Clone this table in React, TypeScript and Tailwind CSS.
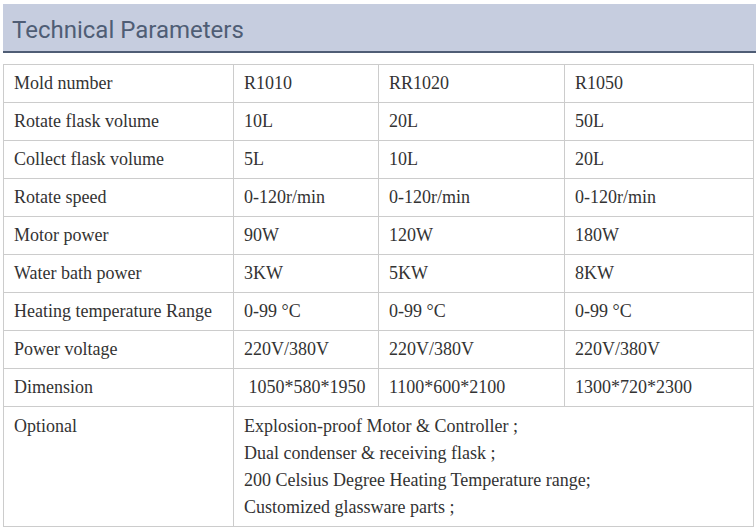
import React from "react";

const rows: string[][] = [
  ["Mold number", "R1010", "RR1020", "R1050"],
  ["Rotate flask volume", "10L", "20L", "50L"],
  ["Collect flask volume", "5L", "10L", "20L"],
  ["Rotate speed", "0-120r/min", "0-120r/min", "0-120r/min"],
  ["Motor power", "90W", "120W", "180W"],
  ["Water bath power", "3KW", "5KW", "8KW"],
  ["Heating temperature Range", "0-99 \u00b0C", "0-99 \u00b0C", "0-99 \u00b0C"],
  ["Power voltage", "220V/380V", "220V/380V", "220V/380V"],
  ["Dimension", "\u00a01050*580*1950", "1100*600*2100", "1300*720*2300"],
];

const optional = [
  "Explosion-proof Motor & Controller ;",
  "Dual condenser & receiving flask ;",
  "200 Celsius Degree Heating Temperature range;",
  "Customized glassware parts ;",
];

export default function App() {
  return (
    <div className="w-[756px] h-[529px] bg-white overflow-hidden pt-[4px] pl-[3px]">
      <div className="h-[49px] bg-[#c6cddf] border-b-[2px] border-[#4f5d75] flex items-center pl-[9px] pt-[4px]">
        <h2
          className="text-[24px] text-[#4f5d75] leading-none"
          style={{ fontFamily: "Roboto, 'Noto Sans', sans-serif" }}
        >
          Technical Parameters
        </h2>
      </div>
      <table
        className="mt-[11px] w-[750px] border-collapse text-[18px] text-[#333333] table-fixed"
        style={{ fontFamily: "'Liberation Serif', 'Times New Roman', serif" }}
      >
        <colgroup>
          <col className="w-[230px]" />
          <col className="w-[145px]" />
          <col className="w-[186px]" />
          <col className="w-[189px]" />
        </colgroup>
        <tbody>
          {rows.map((r) => (
            <tr key={r[0]} className="h-[38px]">
              {r.map((c, i) => (
                <td
                  key={i}
                  className="border border-[#cccccc] pl-[10px] pr-[2px] pt-0 pb-[2px] align-middle whitespace-nowrap leading-[20px]"
                >
                  {c}
                </td>
              ))}
            </tr>
          ))}
          <tr className="h-[119px]">
            <td className="border border-[#cccccc] pl-[10px] pt-[6px] align-top leading-[27px]">Optional</td>
            <td colSpan={3} className="border border-[#cccccc] pl-[10px] pt-[6px] pb-[5px] align-top">
              {optional.map((l) => (
                <div key={l} className="leading-[27px]">
                  {l}
                </div>
              ))}
            </td>
          </tr>
        </tbody>
      </table>
    </div>
  );
}
